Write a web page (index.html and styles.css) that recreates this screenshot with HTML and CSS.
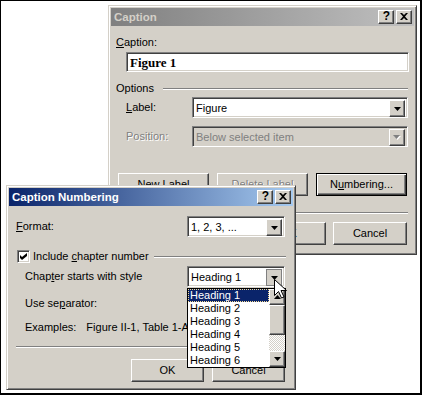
FILE: index.html
```html
<!DOCTYPE html>
<html lang="en">
<head>
    <meta charset="UTF-8">
    <meta name="viewport" content="width=device-width, initial-scale=1.0">
    <title>Caption Numbering</title>
    <link rel="stylesheet" href="styles.css">
</head>
<body>

<div class="desktop">

    <!-- Caption dialog (inactive, behind) -->
    <div class="window caption-win">
        <div class="titlebar inactive">
            <span class="title">Caption</span>
            <div class="title-buttons">
                <span class="tbtn help">?</span>
                <span class="tbtn"><svg width="8" height="7" viewBox="0 0 8 7"><path d="M0 0h2l2 2 2-2h2L5 3.5 8 7H6L4 5 2 7H0l3-3.5z"/></svg></span>
            </div>
        </div>
        <div class="caption-body">
            <div class="line cap-label"><u>C</u>aption:</div>
            <div class="textbox">Figure 1</div>
            <div class="line options">
                <span>Options</span>
                <div class="groove"></div>
            </div>
            <div class="field-row first">
                <span class="lbl"><u>L</u>abel:</span>
                <div class="combo">
                    <span class="combo-text">Figure</span>
                    <span class="drop"><svg width="7" height="4" viewBox="0 0 7 4"><path d="M0 0h7L3.5 4z"/></svg></span>
                </div>
            </div>
            <div class="field-row second">
                <span class="lbl disabled">Position:</span>
                <div class="combo off">
                    <span class="combo-text">Below selected item</span>
                    <span class="drop"><svg width="8" height="5" viewBox="0 0 8 5"><path d="M1 1h7L4.5 5z" fill="#fff"/><path d="M0 0h7L3.5 4z" fill="#808080"/></svg></span>
                </div>
            </div>
            <div class="btn-row">
                <span class="btn wide"><u>N</u>ew Label</span>
                <span class="btn wide disabled"><u>D</u>elete Label</span>
                <span class="btn wide default">N<u>u</u>mbering...</span>
            </div>
            <div class="groove sep"></div>
            <div class="btn-row end">
                <span class="btn">OK</span>
                <span class="btn">Cancel</span>
            </div>
        </div>
    </div>

    <!-- Caption Numbering dialog (active, in front) -->
    <div class="window numbering-win">
        <div class="titlebar active">
            <span class="title">Caption Numbering</span>
            <div class="title-buttons">
                <span class="tbtn help">?</span>
                <span class="tbtn"><svg width="8" height="7" viewBox="0 0 8 7"><path d="M0 0h2l2 2 2-2h2L5 3.5 8 7H6L4 5 2 7H0l3-3.5z"/></svg></span>
            </div>
        </div>
        <div class="numbering-body">
            <div class="num-row format">
                <span><u>F</u>ormat:</span>
                <div class="combo small">
                    <span class="combo-text">1, 2, 3, ...</span>
                    <span class="drop"><svg width="7" height="4" viewBox="0 0 7 4"><path d="M0 0h7L3.5 4z"/></svg></span>
                </div>
            </div>
            <div class="line check-row">
                <span class="check"><svg width="7" height="7" viewBox="0 0 7 7"><path d="M0 2l2 2 5-4v3L2 7 0 5z"/></svg></span>
                <span class="check-label">Include <u>c</u>hapter number</span>
                <div class="groove"></div>
            </div>
            <div class="num-row chapter">
                <span class="indent">Chap<u>t</u>er starts with style</span>
                <div class="combo small">
                    <span class="combo-text">Heading 1</span>
                    <span class="drop pressed"><svg width="7" height="4" viewBox="0 0 7 4"><path d="M0 0h7L3.5 4z"/></svg></span>
                </div>
            </div>
            <div class="line indent sep-row">Use se<u>p</u>arator:</div>
            <div class="line indent examples">Examples:<span class="example-text">Figure II-1, Table 1-A</span></div>
            <div class="groove sep-bottom"></div>
            <div class="btn-row end bottom">
                <span class="btn">OK</span>
                <span class="btn">Cancel</span>
            </div>
        </div>
    </div>

    <!-- open list of the style combo -->
    <div class="dropdown">
        <div class="items">
            <div class="item selected">Heading 1</div>
            <div class="item">Heading 2</div>
            <div class="item">Heading 3</div>
            <div class="item">Heading 4</div>
            <div class="item">Heading 5</div>
            <div class="item">Heading 6</div>
        </div>
        <div class="scrollbar">
            <span class="sb-btn"><svg width="7" height="4" viewBox="0 0 7 4"><path d="M3.5 0L7 4H0z"/></svg></span>
            <span class="sb-thumb"></span>
            <span class="sb-track"></span>
            <span class="sb-btn"><svg width="7" height="4" viewBox="0 0 7 4"><path d="M0 0h7L3.5 4z"/></svg></span>
        </div>
    </div>

    <!-- mouse pointer -->
    <svg class="cursor" width="13" height="20" viewBox="0 0 13 20">
        <path d="M0.5 0.5v16l4-4 3 6.5 2.5-1-3-6.5h5.5z" fill="#fff" stroke="#000"/>
    </svg>

</div>

</body>
</html>
```

FILE: styles.css
```css
* {
    box-sizing: border-box;
}

body {
    margin: 0;
    background: #fff;
    font-family: "Liberation Sans", Arial, sans-serif;
    font-size: 11px;
    line-height: 13px;
    color: #000;
}

.desktop {
    position: relative;
    width: 422px;
    height: 395px;
    border: 1px solid #000;
    border-right-width: 2px;
    border-bottom-width: 2px;
    overflow: hidden;
}

/* Window frames */
.window {
    position: absolute;
    background: #d4d0c8;
    border: 1px solid;
    border-color: #d4d0c8 #404040 #404040 #d4d0c8;
    box-shadow: inset 1px 1px #fff, inset -1px -1px #808080;
    padding: 2px;
}

.caption-win {
    left: 107px;
    top: 4px;
    width: 309px;
    height: 250px;
}

.numbering-win {
    left: 5px;
    top: 184px;
    width: 290px;
    height: 205px;
}

.titlebar {
    display: flex;
    align-items: center;
    justify-content: space-between;
    height: 18px;
    padding: 0 2px 0 3px;
    font-weight: bold;
    font-size: 11.5px;
}

.titlebar.active {
    background: linear-gradient(to right, #0a246a, #a6caf0);
    color: #fff;
}

.titlebar.inactive {
    background: linear-gradient(to right, #808080, #c0c0c0);
    color: #d4d0c8;
}

.title-buttons {
    display: flex;
    gap: 2px;
}

.tbtn, .btn, .drop, .sb-btn, .sb-thumb {
    background: #d4d0c8;
    border: 1px solid;
    border-color: #fff #404040 #404040 #fff;
    box-shadow: inset -1px -1px #808080;
}

.tbtn {
    display: flex;
    align-items: center;
    justify-content: center;
    width: 16px;
    height: 14px;
    color: #000;
    padding-bottom: 1px;
}

.tbtn.help {
    font-weight: bold;
    font-size: 12px;
    padding-left: 1px;
}

/* Shared controls */
.line {
    height: 13px;
    display: flex;
    align-items: center;
}

.groove {
    height: 2px;
    border-top: 1px solid #808080;
    border-bottom: 1px solid #fff;
}

.line .groove {
    flex: 1;
}

.textbox, .combo, .check {
    background: #fff;
    border: 1px solid;
    border-color: #808080 #fff #fff #808080;
    box-shadow: inset 1px 1px #404040, inset -1px -1px #d4d0c8;
}

.textbox {
    height: 20px;
    margin: 3px 0 0 10px;
    padding: 0 3px;
    font-family: "Liberation Serif", "Times New Roman", serif;
    font-weight: bold;
    font-size: 13px;
    line-height: 19px;
}

.combo {
    display: flex;
    height: 21px;
    padding: 2px;
}

.combo-text {
    flex: 1;
    padding-left: 1px;
    line-height: 17px;
    white-space: nowrap;
    overflow: hidden;
}

.combo.off {
    background: #d4d0c8;
    color: #808080;
}

.drop {
    display: flex;
    align-items: center;
    justify-content: center;
    width: 16px;
    height: 17px;
}

.drop.pressed {
    border-color: #808080;
    box-shadow: none;
    padding: 1px 0 0 1px;
}

.btn {
    display: flex;
    align-items: center;
    justify-content: center;
    width: 74px;
    height: 23px;
    white-space: nowrap;
}

.btn.wide {
    width: 91px;
}

.btn.default {
    border-color: #000;
    box-shadow: inset 1px 1px #fff, inset -1px -1px #404040, inset -2px -2px #808080;
}

.disabled {
    color: #808080;
    text-shadow: 1px 1px #fff;
}

.btn-row {
    display: flex;
    gap: 8px;
}

.btn-row.end {
    justify-content: flex-end;
    gap: 7px;
}

/* Caption dialog */
.caption-body {
    padding: 0 5px;
}

.cap-label {
    margin-top: 10px;
}

.options {
    margin: 10px 1px 0 0;
}

.options .groove {
    margin-left: 9px;
}

.field-row {
    display: flex;
    align-items: center;
    margin-left: 10px;
}

.field-row.first {
    margin-top: 2px;
}

.field-row.second {
    margin-top: 8px;
}

.field-row .lbl {
    width: 66px;
}

.field-row .combo {
    width: 216px;
}

.caption-body .btn-row {
    margin: 26px 0 0 2px;
}

.caption-body .sep {
    margin-top: 16px;
    margin-right: 1px;
}

.caption-body .btn-row.end {
    margin: 8px 2px 0 0;
}

/* Caption Numbering dialog */
.numbering-body {
    padding: 0 8px 0 7px;
}

.num-row {
    display: flex;
    align-items: center;
    justify-content: space-between;
}

.num-row .combo.small {
    width: 98px;
}

.format {
    margin-top: 10px;
}

.check-row {
    margin-top: 13px;
}

.check {
    display: flex;
    align-items: center;
    justify-content: center;
    width: 13px;
    height: 13px;
    margin-left: 1px;
}

.check-label {
    margin-left: 3px;
}

.check-row .groove {
    margin: 0 -1px 0 5px;
}

.indent {
    margin-left: 9px;
}

.chapter {
    margin-top: 3px;
}

.sep-row {
    margin-top: 10px;
}

.examples {
    margin-top: 11px;
    white-space: nowrap;
}

.example-text {
    margin-left: 10px;
}

.sep-bottom {
    margin: 12px -1px 0 0;
}

.numbering-body .btn-row.bottom {
    margin-top: 11px;
    gap: 8px;
}

.numbering-body .btn {
    width: 73px;
}

/* Open list */
.dropdown {
    position: absolute;
    left: 186px;
    top: 287px;
    width: 99px;
    height: 80px;
    display: flex;
    background: #fff;
    border: 1px solid #000;
}

.items {
    flex: 1;
}

.item {
    height: 13px;
    padding-left: 2px;
    white-space: nowrap;
}

.item.selected {
    background: #0a246a;
    color: #fff;
    outline: 1px dotted #f5db95;
    outline-offset: -1px;
}

.scrollbar {
    display: flex;
    flex-direction: column;
    width: 16px;
}

.sb-btn {
    display: flex;
    align-items: center;
    justify-content: center;
    height: 16px;
}

.sb-thumb {
    height: 30px;
}

.sb-track {
    flex: 1;
    background: repeating-conic-gradient(#fff 0 25%, #d4d0c8 0 50%);
    background-size: 2px 2px;
}

.cursor {
    position: absolute;
    left: 273px;
    top: 278px;
}
```
